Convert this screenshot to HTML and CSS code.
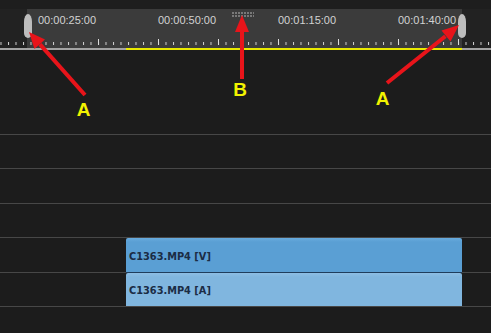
FILE: index.html
```html
<!DOCTYPE html>
<html>
<head>
<meta charset="utf-8">
<link rel="stylesheet" href="styles.css">
</head>
<body>
<div class="page">
  <div class="ruler">
    <div class="ruler-top"></div>
    <div class="ruler-body">
      <div class="outside"></div>
      <div class="range">
        <span class="tc">00:00:25:00</span>
        <span class="tc">00:00:50:00</span>
        <span class="tc">00:01:15:00</span>
        <span class="tc">00:01:40:00</span>
      </div>
      <div class="outside"></div>
      <svg class="ticks" width="491" height="7" viewBox="0 0 491 7">
        <defs>
          <pattern id="minor" x="0.5" y="0" width="7.5" height="7" patternUnits="userSpaceOnUse">
            <rect x="0" y="3" width="1" height="3" fill="#d0d0d0"/>
          </pattern>
          <pattern id="major" x="38" y="0" width="60" height="7" patternUnits="userSpaceOnUse">
            <rect x="0" y="0" width="1" height="6" fill="#dcdcdc"/>
          </pattern>
        </defs>
        <rect x="0" y="0" width="491" height="7" fill="url(#minor)"/>
        <rect x="0" y="0" width="491" height="7" fill="url(#major)"/>
      </svg>
      <div class="grip"></div>
      <div class="handle handle-left"></div>
      <div class="handle handle-right"></div>
    </div>
    <svg class="baseline" width="491" height="2" viewBox="0 0 491 2">
      <rect x="0" y="0" width="491" height="2" fill="#a3a3a3"/>
      <rect x="126" y="0" width="336" height="2" fill="#e9e900"/>
    </svg>
  </div>
  <div class="tracks">
    <div class="row row-first"></div>
    <div class="row r34"></div>
    <div class="row r35"></div>
    <div class="row r34"></div>
    <div class="row r35"><div class="clip clip-v">C1363.MP4 [V]</div></div>
    <div class="row r34"><div class="clip clip-a">C1363.MP4 [A]</div></div>
    <div class="row row-last"></div>
  </div>
  <svg class="annot" width="491" height="333" viewBox="0 0 491 333">
    <g stroke="#e8141a" stroke-width="4" stroke-linecap="butt">
      <line x1="85" y1="95" x2="40" y2="44.3"/>
      <line x1="242" y1="79" x2="242" y2="32"/>
      <line x1="387" y1="83" x2="445.4" y2="36.3"/>
    </g>
    <g fill="#e8141a">
      <polygon points="29,32 45,39.5 34.5,49"/>
      <polygon points="242,15 235,32 249,32"/>
      <polygon points="459,25 450.5,41.5 441.5,30.5"/>
    </g>
    <g class="letter" fill="#f2f200">
      <text x="83.5" y="116" text-anchor="middle">A</text>
      <text x="240" y="96" text-anchor="middle">B</text>
      <text x="382.5" y="105" text-anchor="middle">A</text>
    </g>
  </svg>
</div>
</body>
</html>
```

FILE: styles.css
```css
html, body {
  margin: 0;
  padding: 0;
  background: #1c1c1c;
}
.page {
  position: relative;
  width: 491px;
  height: 333px;
  overflow: hidden;
  background: #1c1c1c;
  font-family: "Liberation Sans", Arial, sans-serif;
}
.ruler {
  display: flex;
  flex-direction: column;
  height: 50px;
}
.ruler-top {
  flex: none;
  height: 9px;
  background: #1e1e1e;
}
.ruler-body {
  flex: none;
  position: relative;
  height: 39px;
  display: grid;
  grid-template-columns: 27px 435px 1fr;
  grid-template-rows: 39px;
  overflow: hidden;
}
.outside {
  background: #222222;
}
.range {
  background: #3b3b3b;
  display: flex;
  padding-left: 11px;
  gap: 63px;
  padding-top: 5px;
  box-sizing: border-box;
}
.tc {
  color: #d2d2d2;
  font-size: 11px;
  line-height: 13px;
  width: 57px;
  white-space: nowrap;
}
.ticks {
  position: absolute;
  left: 0;
  top: 30px;
  display: block;
}
.grip {
  position: absolute;
  left: 232px;
  top: 3px;
  width: 22px;
  height: 5px;
  background-image: radial-gradient(circle at 1px 1px, #9a9a9a 0.6px, transparent 0.9px);
  background-size: 3px 3px;
}
.handle {
  position: absolute;
  top: 5px;
  width: 8px;
  height: 24px;
  background: #bdbdbd;
  border-radius: 4px 4px 4px 4px / 8px 8px 5px 5px;
}
.handle-left { left: 24px; }
.handle-right { left: 458px; }
.baseline {
  flex: none;
  display: block;
}
.tracks {
  display: flex;
  flex-direction: column;
}
.row {
  border-bottom: 1px solid #474747;
  box-sizing: border-box;
  flex: none;
}
.row-first { height: 85px; }
.r34 { height: 34px; }
.r35 { height: 35px; }
.row-last { border-bottom: none; height: 30px; }
.clip {
  margin-left: 126px;
  width: 336px;
  height: 35px;
  box-sizing: border-box;
  border-bottom: 1px solid #1f3d5c;
  padding-left: 3px;
  display: flex;
  align-items: center;
  padding-top: 2px;
  font-family: "DejaVu Sans", Verdana, sans-serif;
  font-weight: bold;
  font-size: 9.8px;
  color: #1b2c44;
  border-radius: 2px 2px 0 0;
}
.clip-v {
  background: linear-gradient(to bottom, #68abde 0, #5a9fd4 4px, #5a9fd4 100%);
}
.clip-a {
  height: 33px;
  border-bottom: none;
  background: linear-gradient(to bottom, #8dbee4 0, #80b6df 4px, #80b6df 100%);
}
.annot {
  position: absolute;
  left: 0;
  top: 0;
}
.letter text {
  font-family: "Liberation Sans", Arial, sans-serif;
  font-weight: bold;
  font-size: 19px;
}
```
